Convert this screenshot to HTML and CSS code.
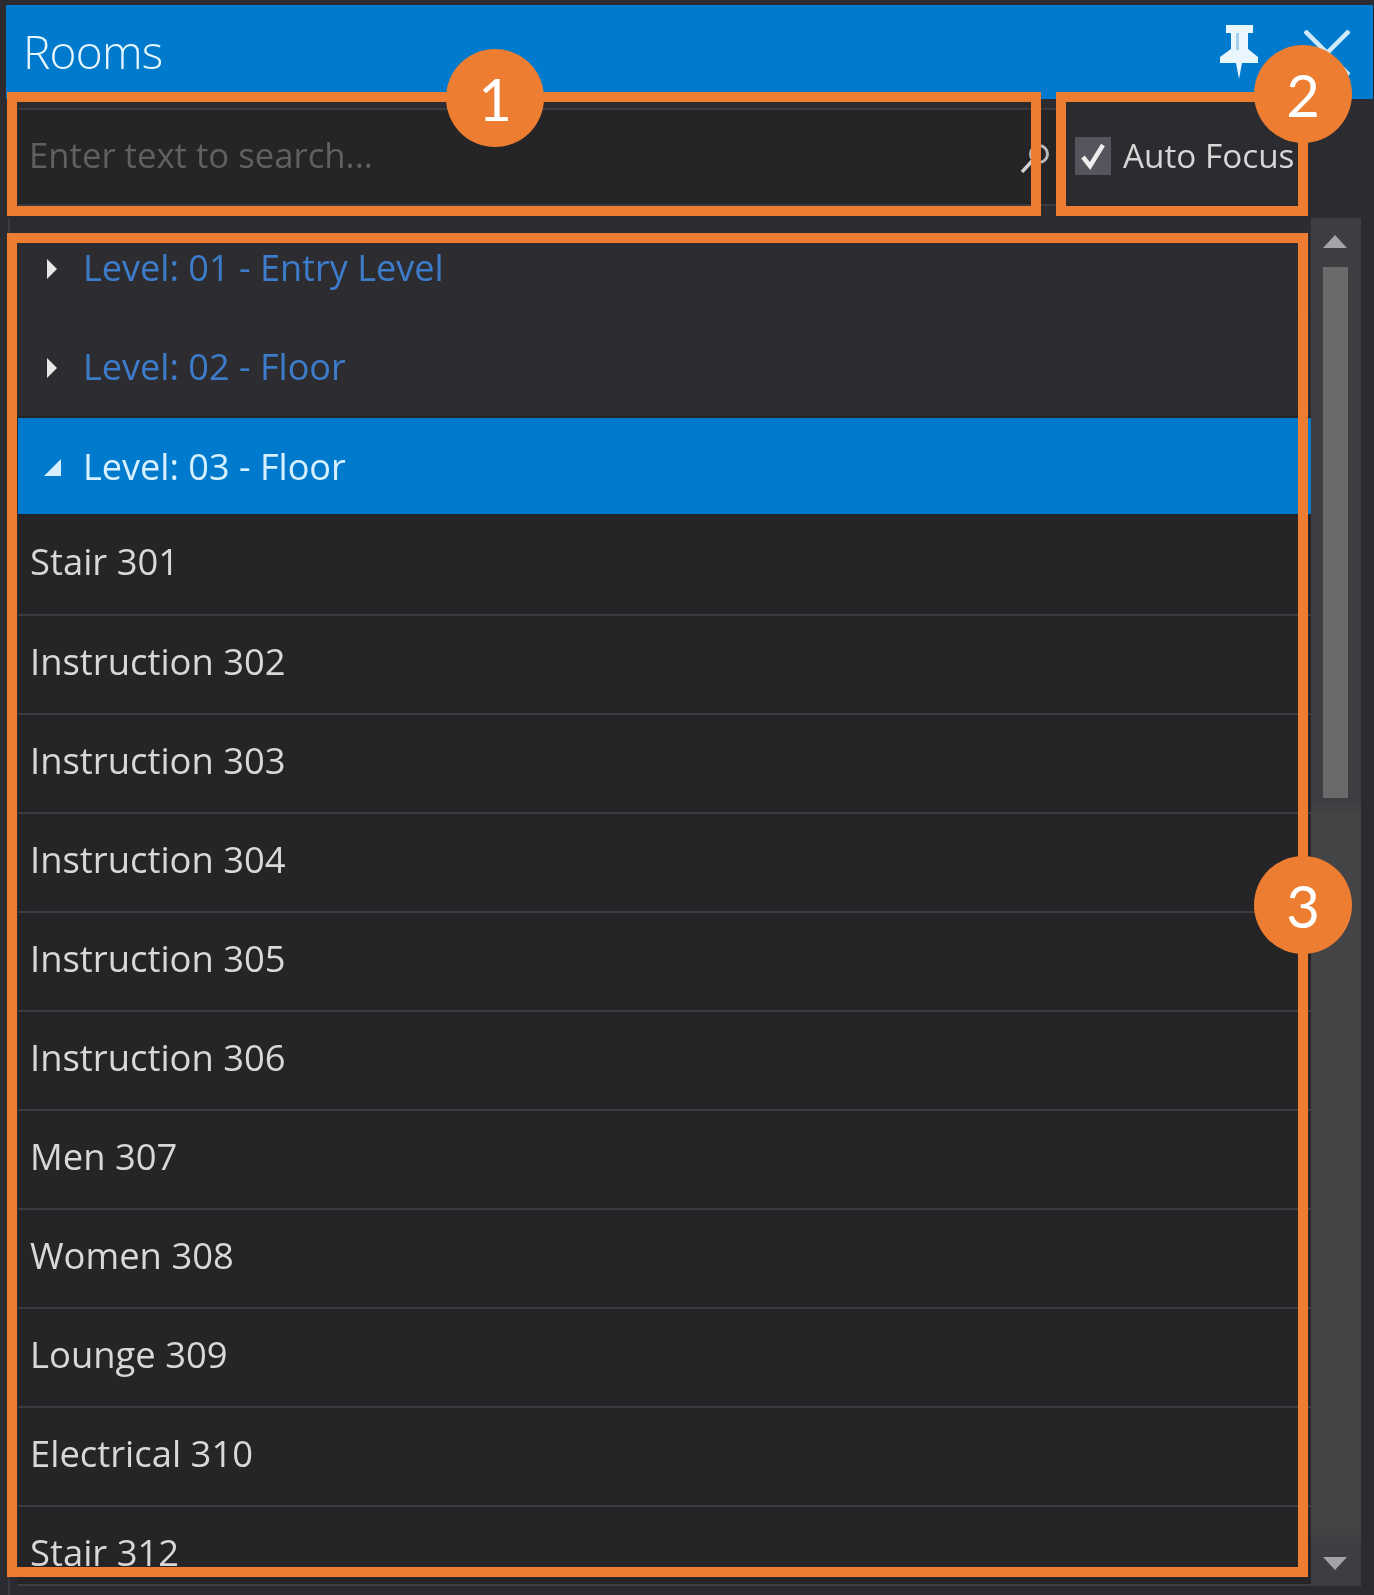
FILE: index.html
```html
<!DOCTYPE html>
<html lang="en">
<head>
<meta charset="utf-8">
<title>Rooms</title>
<link rel="stylesheet" href="styles.css">
</head>
<body>
<div class="panel">
  <header class="titlebar">
    <span class="title">Rooms</span>
    <div class="title-actions">
      <svg class="pin" viewBox="0 0 38 54" width="38" height="54"><path d="M6 0H33V8H28V24L38 32V38H22L19 54L16 38H0V32L11 24V8H6Z" fill="#eaf6fd"/><path d="M16 8h3v17h-3z" fill="#a8d0ea"/></svg>
      <svg class="close" viewBox="0 0 46 46" width="46" height="46"><path d="M1 1l44 44M45 1L1 45" stroke="#cfeafb" stroke-width="4.5" fill="none"/></svg>
    </div>
  </header>
  <div class="searchrow">
    <div class="searchbox">
      <span class="placeholder">Enter text to search...</span>
      <svg class="lens" viewBox="0 0 30 30" width="30" height="30"><circle cx="19" cy="11" r="8.5" stroke="#b8b8b8" stroke-width="3" fill="none"/><path d="M13 17L2 29" stroke="#d0d0d0" stroke-width="3.5"/></svg>
    </div>
    <label class="autofocus">
      <span class="check"><svg viewBox="0 0 36 38" width="36" height="38"><path d="M8 20l7 9L28 8" stroke="#eeeeee" stroke-width="4.5" fill="none"/></svg></span>
      <span class="check-label">Auto Focus</span>
    </label>
  </div>
  <div class="body">
    <ul class="tree">
      <li class="row level"><span class="caret right"></span><span>Level: 01 - Entry Level</span></li>
      <li class="row level"><span class="caret right"></span><span>Level: 02 - Floor</span></li>
      <li class="row level selected"><span class="caret open"></span><span>Level: 03 - Floor</span></li>
      <li class="row item">Stair 301</li>
      <li class="row item">Instruction 302</li>
      <li class="row item">Instruction 303</li>
      <li class="row item">Instruction 304</li>
      <li class="row item">Instruction 305</li>
      <li class="row item">Instruction 306</li>
      <li class="row item">Men 307</li>
      <li class="row item">Women 308</li>
      <li class="row item">Lounge 309</li>
      <li class="row item">Electrical 310</li>
      <li class="row item">Stair 312</li>
    </ul>
    <div class="scrollbar">
      <span class="arrow up"></span>
      <div class="track"><div class="thumb"></div></div>
      <span class="arrow down"></span>
    </div>
  </div>

  <div class="callout box-1"></div>
  <div class="callout box-2"></div>
  <div class="callout box-3"></div>
  <div class="badge badge-1">1</div>
  <div class="badge badge-2">2</div>
  <div class="badge badge-3">3</div>
</div>
</body>
</html>
```
FILE: styles.css
```css
* { box-sizing: border-box; }
html, body { margin: 0; padding: 0; background: #2b2b30; }
body { font-family: "Open Sans", "Noto Sans", sans-serif; }
.panel {
  position: relative;
  width: 1374px;
  height: 1595px;
  overflow: hidden;
  padding: 5px 0 0 6px;
  display: flex;
  flex-direction: column;
  background: #2b2b30;
}
.titlebar {
  height: 94px;
  flex: none;
  background: #007acc;
  display: flex;
  align-items: center;
  justify-content: space-between;
  padding: 0 23px 0 17px;
  margin-right: 1px;
}
.title { font-size: 46px; font-weight: 300; color: #e6f6ff; letter-spacing: -.8px; margin-top: -3px; filter: blur(.6px); }
.title-actions { display: flex; align-items: center; gap: 46px; margin-top: 1px; }
.pin { margin-top: -1px; filter: blur(.7px); }
.close { filter: blur(.6px); }

.searchrow {
  height: 119px;
  flex: none;
  display: flex;
  padding-left: 12px;
}
.searchbox {
  width: 1038px;
  height: 98px;
  margin-top: 9px;
  background: #252527;
  border-top: 2px solid #3a3a40;
  border-bottom: 2px solid #3a3a40;
  display: flex;
  align-items: center;
  justify-content: space-between;
  padding: 0 6px 0 11px;
}
.placeholder { font-size: 34.7px; color: #606062; margin-top: -5px; filter: blur(.6px); }
.lens { margin-top: 1px; flex: none; filter: blur(.5px); }
.autofocus {
  display: flex;
  align-items: center;
  height: 98px;
  margin-top: 9px;
  margin-left: 19px;
  gap: 12px;
}
.check {
  width: 36px;
  height: 38px;
  background: #55555e;
  margin-top: -3px;
  display: block;
  flex: none;
}
.check svg { display: block; }
.check-label { font-size: 33.3px; color: #d6d6d6; margin-top: -5px; filter: blur(.7px); white-space: nowrap; }

.body {
  flex: 1;
  min-height: 0;
  display: flex;
  margin-left: 2px;
  border-left: 2px solid #3a3a40;
  padding: 0 13px 9px 8px;
}
.tree {
  list-style: none;
  margin: 0;
  padding: 0;
  width: 1293px;
  flex: none;
  overflow: hidden;
  background: #252527;
  border-bottom: 2px solid #3f3f46;
}
.row {
  height: 99px;
  display: flex;
  align-items: center;
  font-size: 36.4px;
  color: #d8d8d8;
}
.row > span:last-child, .item { white-space: nowrap; filter: blur(.7px); }
.level {
  background: #2d2d31;
  color: #3d7ccb;
  font-size: 36.1px;
  padding-left: 27px;
  border-bottom: 1px solid #29292c;
}
.level.selected {
  background: #007acc;
  color: #d6f0ff;
  height: 96px;
  margin-top: 2px;
  border: 0;
}
.item {
  padding: 0 0 8px 12px;
  border-bottom: 2px solid #3c3c40;
}
.level.selected + .item { height: 102px; padding-bottom: 6px; }
.caret { width: 38px; flex: none; position: relative; height: 20px; }
.caret.right::before {
  content: "";
  position: absolute;
  left: 2px; top: 2px;
  border-left: 10px solid #e6e6e6;
  border-top: 10px solid transparent;
  border-bottom: 10px solid transparent;
}
.caret.open::before {
  content: "";
  position: absolute;
  left: -1px; top: 3px;
  border-right: 17px solid #d6f0ff;
  border-top: 17px solid transparent;
}

.scrollbar {
  width: 50px;
  flex: none;
  background: linear-gradient(#3e3e42 0, #3e3e42 582px, #444446 600px, #444446 1310px, #3e3e42 1330px);
  display: flex;
  flex-direction: column;
  align-items: center;
  position: relative;
}
.arrow { display: block; width: 0; height: 0; flex: none; margin-left: -2px; border-left: 12px solid transparent; border-right: 12px solid transparent; }
.arrow.up { border-bottom: 13px solid #a4a4a8; margin-top: 17px; }
.arrow.down { border-top: 13px solid #a4a4a8; margin-bottom: 16px; }
.track { flex: 1; width: 25px; margin-left: -2px; }
.thumb { width: 25px; height: 531px; margin-top: 19px; background: #6a6a6a; }

.callout {
  position: absolute;
  border: 10px solid #ed7d31;
}
.box-1 { left: 7px; top: 92px; width: 1034px; height: 124px; }
.box-2 { left: 1056px; top: 92px; width: 252px; height: 124px; }
.box-3 { left: 7px; top: 233px; width: 1301px; height: 1344px; }
.badge {
  position: absolute;
  width: 98px;
  height: 98px;
  border-radius: 50%;
  background: #ed7d31;
  color: #ffffff;
  font-family: "Lato", "Liberation Sans", sans-serif;
  font-size: 58px;
  display: flex;
  align-items: center;
  justify-content: center;
}
.badge-1 { left: 446px; top: 49px; }
.badge-2 { left: 1254px; top: 45px; }
.badge-3 { left: 1254px; top: 856px; }
```
